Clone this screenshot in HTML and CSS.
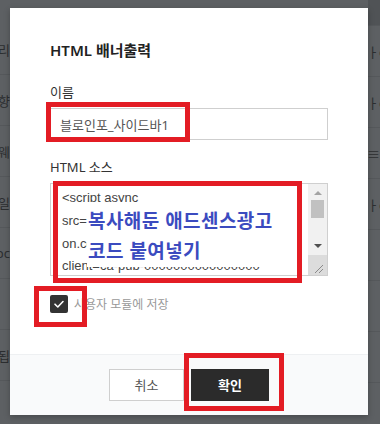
FILE: index.html
```html
<!DOCTYPE html>
<html lang="ko">
<head>
<meta charset="utf-8">
<link rel="stylesheet" href="styles.css">
</head>
<body>
<div class="page">
  <div class="side side-left">
    <div class="row top-left"></div>
    <div class="row"><span>카테고리</span></div>
    <div class="row"><span>추천 방향</span></div>
    <div class="row"><span>모바일/웨</span></div>
    <div class="row"><span>스타일</span></div>
    <div class="row"><span>pc</span></div>
    <div class="row"><span></span></div>
    <div class="row"><span>표시상됩</span></div>
  </div>
  <div class="center"></div>
  <div class="side side-right">
    <div class="row top"></div>
    <div class="row"><span>ㅏo</span></div>
    <div class="row"><span>ㅏo</span></div>
    <div class="row"><span>≡</span></div>
    <div class="row"><span>ㅏo</span></div>
    <div class="row"></div>
    <div class="row"></div>
    <div class="row"></div>
  </div>
</div>

<div class="modal">
  <div class="modal-body">
    <h2 class="title">HTML 배너출력</h2>
    <label class="label">이름</label>
    <div class="input">블로인포_사이드바1</div>
    <label class="label label-src">HTML 소스</label>
    <div class="textarea">
      <div class="code">&lt;script async<br>src="https://pagead2.googlesyndicati<br>on.com/pagead/js/adsbygoogle.js?<br>client=ca-pub-0000000000000000</div>
      <div class="scrollbar">
        <div class="arrow up"></div>
        <div class="thumb"></div>
        <div class="track"></div>
        <div class="arrow down"></div>
        <div class="grip">
          <svg width="18" height="20" viewBox="0 0 18 20"><path d="M7 18 L15 10 M11 18 L15 14" stroke="#8a8a8a" stroke-width="1" fill="none"/></svg>
        </div>
      </div>
    </div>
    <div class="check-row">
      <span class="checkbox">
        <svg width="18" height="18" viewBox="0 0 18 18"><path d="M5 9.2 L7.8 12 L13 6.5" stroke="#fff" stroke-width="1.6" fill="none" stroke-linecap="round" stroke-linejoin="round"/></svg>
      </span>
      <span class="check-label">사용자 모듈에 저장</span>
    </div>
  </div>
  <div class="modal-footer">
    <button class="btn btn-cancel">취소</button>
    <button class="btn btn-ok">확인</button>
  </div>

  <div class="note">복사해둔 애드센스광고<br>코드 붙여넣기</div>
  <div class="mark mark-input"></div>
  <div class="mark mark-src"></div>
  <div class="mark mark-check"></div>
  <div class="mark mark-ok"></div>
</div>
</body>
</html>
```

FILE: styles.css
```css
* { box-sizing: border-box; }
html, body { margin: 0; padding: 0; }
body {
  width: 380px;
  height: 424px;
  overflow: hidden;
  background: #5d6063;
  font-family: "Noto Sans", "Noto Sans CJK KR", sans-serif;
  position: relative;
}
.page {
  display: grid;
  grid-template-columns: 10px 1fr 12px;
  height: 424px;
}
.side {
  display: flex;
  flex-direction: column;
  overflow: hidden;
}
.side .row {
  height: 51px;
  flex: none;
  border-bottom: 1px solid #55585b;
  display: flex;
  align-items: center;
  overflow: hidden;
  white-space: nowrap;
  font-size: 13px;
  color: #2c2e30;
}
.side .row.top { height: 26px; }
.side .row.top-left { height: 24px; border-bottom-color: transparent; }
.side-left .row { justify-content: flex-end; }
.side-right .row.top { background: #505356; border-bottom-color: #55585b; }
.side-right .row span { margin-left: -1px; }

.modal {
  position: absolute;
  left: 10px;
  top: 8px;
  width: 358px;
  height: 407px;
  background: #fff;
  display: flex;
  flex-direction: column;
  box-shadow: 0 2px 6px rgba(0,0,0,0.25);
}
.modal-body {
  flex: 1;
  padding: 32px 40px 0 40px;
  display: flex;
  flex-direction: column;
}
.title {
  margin: 0;
  font-size: 15px;
  line-height: 20px;
  font-weight: 600;
  color: #222;
}
.label {
  display: block;
  margin-top: 23px;
  font-size: 13px;
  line-height: 18px;
  color: #333;
}
.label-src { margin-top: 18px; }
.input {
  margin-top: 7px;
  height: 32px;
  border: 1px solid #cfcfcf;
  padding: 0 9px;
  display: flex;
  align-items: center;
  font-size: 13px;
  color: #555;
}
.textarea {
  margin-top: 7px;
  height: 93px;
  border: 1px solid #cfcfcf;
  display: flex;
  overflow: hidden;
}
.code {
  flex: 1;
  padding: 3px 0 0 11px;
  font-size: 13px;
  line-height: 22.8px;
  color: #444;
  white-space: nowrap;
  overflow: hidden;
  font-family: "Liberation Sans", "Noto Sans", sans-serif;
}
.scrollbar {
  width: 19px;
  flex: none;
  background: #f1f1f1;
  display: flex;
  flex-direction: column;
  align-items: center;
}
.arrow {
  width: 0; height: 0;
  border-left: 4px solid transparent;
  border-right: 4px solid transparent;
  flex: none;
}
.arrow.up { border-bottom: 4px solid #a3a3a3; margin-top: 7px; }
.arrow.down { border-top: 4px solid #505050; margin-bottom: 7px; }
.thumb {
  width: 13px;
  height: 18px;
  background: #c1c1c1;
  margin-top: 5px;
  flex: none;
}
.track { flex: 1; }
.grip {
  width: 19px;
  height: 20px;
  background: #dcdcdc;
  flex: none;
}
.grip svg { display: block; }
.check-row {
  margin-top: 19px;
  display: flex;
  align-items: center;
  gap: 6px;
}
.checkbox {
  width: 18px;
  height: 18px;
  background: #333;
  border-radius: 2px;
  display: block;
}
.checkbox svg { display: block; }
.check-label {
  font-size: 12px;
  color: #999;
}
.modal-footer {
  height: 61px;
  background: #f9fafb;
  border-top: 1px solid #eef0f2;
  display: flex;
  justify-content: center;
  align-items: center;
  gap: 7px;
  padding-bottom: 1px;
}
.btn {
  height: 32px;
  font-family: "Noto Sans CJK KR", "Noto Sans", sans-serif;
  font-size: 13px;
  border-radius: 0;
  padding: 0;
  cursor: pointer;
}
.btn-cancel {
  width: 75px;
  background: #fff;
  border: 1px solid #cfcfcf;
  color: #555;
}
.btn-ok {
  width: 78px;
  background: #2b2b2b;
  border: 1px solid #2b2b2b;
  color: #fff;
  font-weight: 700;
}
.note {
  position: absolute;
  left: 77px;
  top: 194px;
  width: 210px;
  height: 65px;
  background: #fff;
  padding: 3px 0 0 1px;
  font-family: "Noto Sans CJK KR", sans-serif;
  font-size: 19px;
  font-weight: 700;
  line-height: 30px;
  letter-spacing: 0.4px;
  color: #3b4bbf;
  white-space: nowrap;
}
.mark {
  position: absolute;
  border: 5px solid #e31c24;
}
.mark-input { left: 36px; top: 94px; width: 144px; height: 40px; }
.mark-src { left: 43px; top: 173px; width: 249px; height: 102px; }
.mark-check { left: 24px; top: 278px; width: 53px; height: 41px; }
.mark-ok { left: 174px; top: 345px; width: 100px; height: 58px; }
```
